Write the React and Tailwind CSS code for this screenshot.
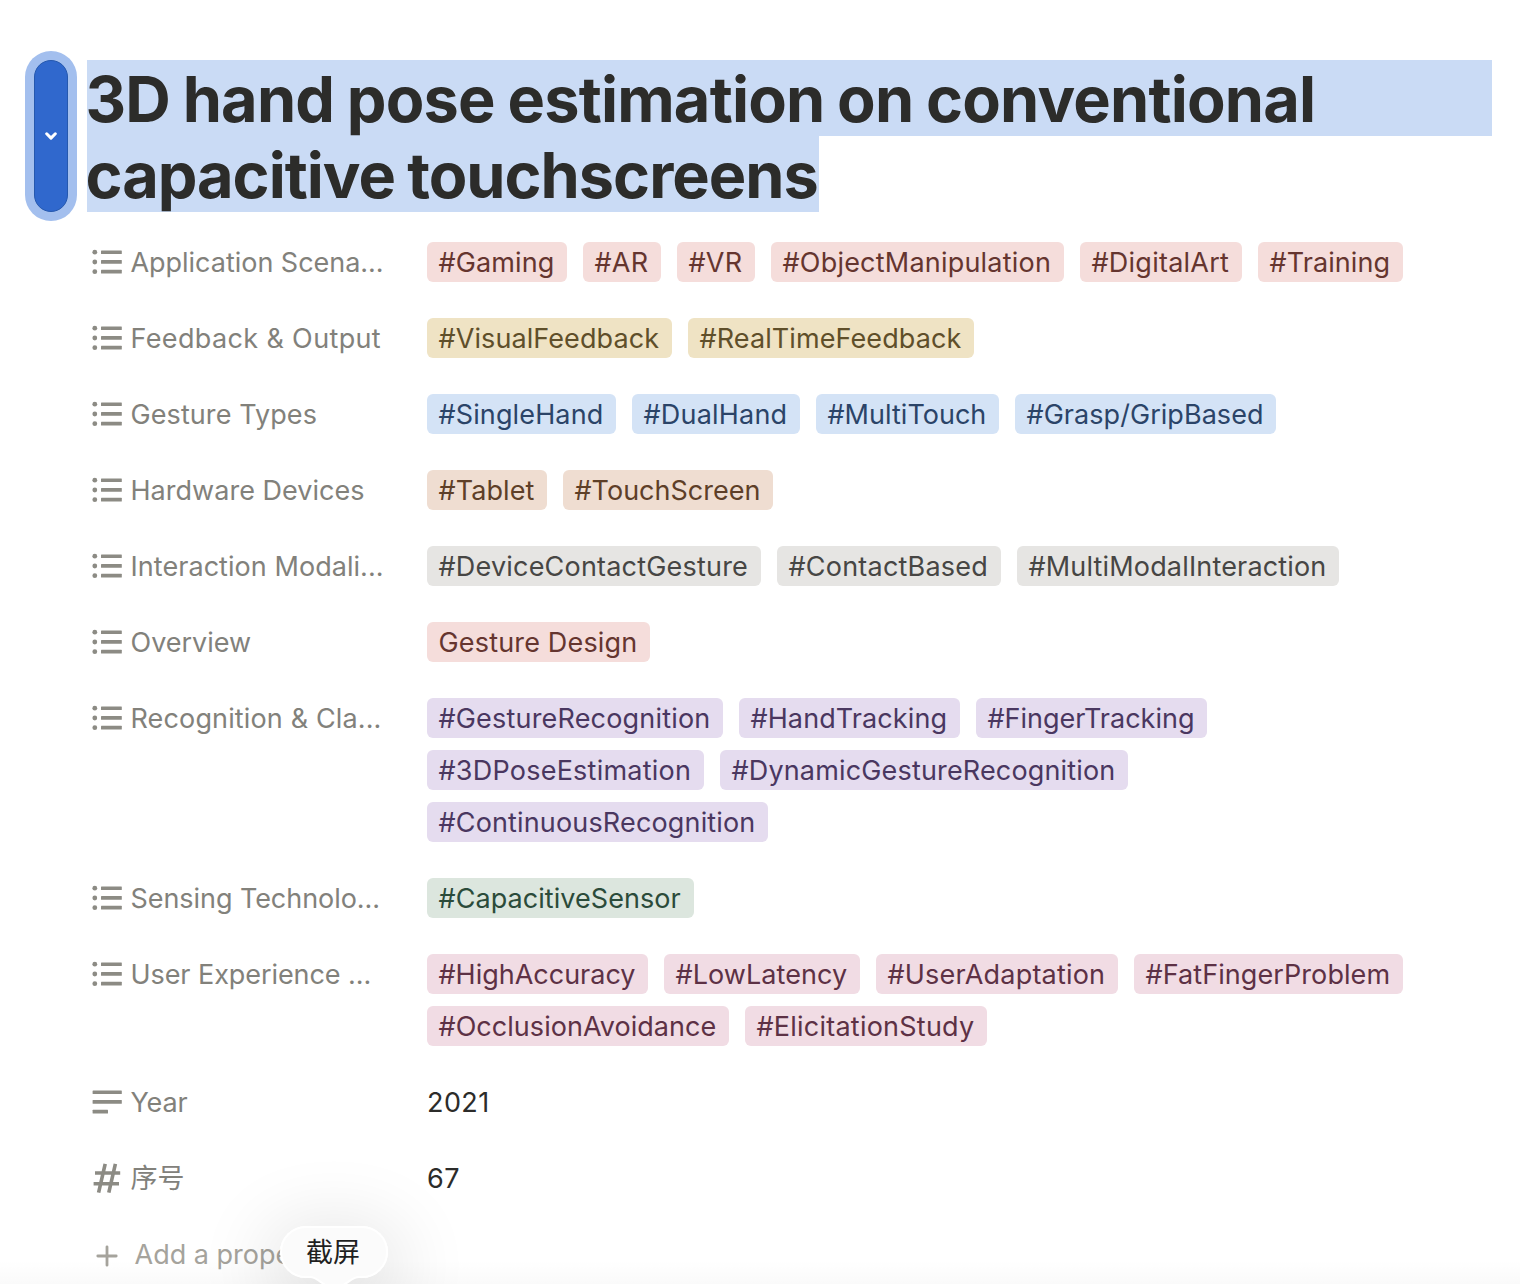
const TONES = {
  red: "bg-[#f5dddb] text-[#65352f]",
  yellow: "bg-[#efe3c4] text-[#5f4f2a]",
  blue: "bg-[#d4e3f6] text-[#2b4468]",
  orange: "bg-[#efddd1] text-[#5e3f28]",
  gray: "bg-[#e6e5e3] text-[#474644]",
  purple: "bg-[#e5dcef] text-[#4a3760]",
  green: "bg-[#dce6de] text-[#2b4b3a]",
  pink: "bg-[#f1dce4] text-[#5d3145]",
};

const ROWS = [
  {
    label: "Application Scena...",
    tracking: "tracking-[-0.03px]",
    tone: "red",
    tags: [
      ["#Gaming", "w-[140px] tracking-[0.11px]"],
      ["#AR", "w-[78px] tracking-[0.25px]"],
      ["#VR", "w-[78px] tracking-[0.25px]"],
      ["#ObjectManipulation", "w-[293px] tracking-[0.21px]"],
      ["#DigitalArt", "w-[162px] tracking-[0.24px]"],
      ["#Training", "w-[145px] tracking-[0.08px]"],
    ],
  },
  {
    label: "Feedback & Output",
    tracking: "tracking-[0.36px]",
    tone: "yellow",
    tags: [
      ["#VisualFeedback", "w-[245px] tracking-[0.09px]"],
      ["#RealTimeFeedback", "w-[286px] tracking-[0.1px]"],
    ],
  },
  {
    label: "Gesture Types",
    tracking: "tracking-[0.08px]",
    tone: "blue",
    tags: [
      ["#SingleHand", "w-[189px] tracking-[0.13px]"],
      ["#DualHand", "w-[168px] tracking-[0.2px]"],
      ["#MultiTouch", "w-[183px] tracking-[0.02px]"],
      ["#Grasp/GripBased", "w-[261px] tracking-[0.05px]"],
    ],
  },
  {
    label: "Hardware Devices",
    tracking: "tracking-[0.03px]",
    tone: "orange",
    tags: [
      ["#Tablet", "w-[120px] tracking-[0.08px]"],
      ["#TouchScreen", "w-[210px] tracking-[0.01px]"],
    ],
  },
  {
    label: "Interaction Modali...",
    tracking: "tracking-[0.05px]",
    tone: "gray",
    tags: [
      ["#DeviceContactGesture", "w-[334px] tracking-[0.2px]"],
      ["#ContactBased", "w-[224px] tracking-[0.22px]"],
      ["#MultiModalInteraction", "w-[322px] tracking-[0.165px]"],
    ],
  },
  {
    label: "Overview",
    tracking: "tracking-[0px]",
    tone: "red",
    tags: [["Gesture Design", "w-[223px] tracking-[0.17px]"]],
  },
  {
    label: "Recognition & Cla...",
    tracking: "tracking-[0.14px]",
    tone: "purple",
    tags: [
      ["#GestureRecognition", "w-[296px] tracking-[0.19px]"],
      ["#HandTracking", "w-[221px] tracking-[0.1px]"],
      ["#FingerTracking", "w-[231px] tracking-[0px]"],
      ["#3DPoseEstimation", "w-[277px] tracking-[0.23px]"],
      ["#DynamicGestureRecognition", "w-[408px] tracking-[0.16px]"],
      ["#ContinuousRecognition", "w-[341px] tracking-[0.155px]"],
    ],
  },
  {
    label: "Sensing Technolo...",
    tracking: "tracking-[-0.06px]",
    tone: "green",
    tags: [["#CapacitiveSensor", "w-[267px] tracking-[0.06px]"]],
  },
  {
    label: "User Experience ...",
    tracking: "tracking-[-0.07px]",
    tone: "pink",
    tags: [
      ["#HighAccuracy", "w-[221px] tracking-[-0.01px]"],
      ["#LowLatency", "w-[196px] tracking-[0.08px]"],
      ["#UserAdaptation", "w-[242px] tracking-[0.2px]"],
      ["#FatFingerProblem", "w-[269px] tracking-[0.08px]"],
      ["#OcclusionAvoidance", "w-[302px] tracking-[0.04px]"],
      ["#ElicitationStudy", "w-[242px] tracking-[0.23px]"],
    ],
  },
];

function ListIcon() {
  return (
    <svg viewBox="0 0 30 26" className="h-[26px] w-[30px]" fill="currentColor">
      <circle cx="2.8" cy="3.2" r="2.4" />
      <circle cx="2.8" cy="13" r="2.4" />
      <circle cx="2.8" cy="22.7" r="2.4" />
      <rect x="9" y="1.4" width="20.8" height="3.7" rx="0.5" />
      <rect x="9" y="11.1" width="20.8" height="3.7" rx="0.5" />
      <rect x="9" y="20.8" width="20.8" height="3.7" rx="0.5" />
    </svg>
  );
}

function TextIcon() {
  return (
    <svg viewBox="0 0 30 26" className="h-[26px] w-[30px]" fill="currentColor">
      <rect x="0.6" y="1.4" width="29.2" height="3.7" rx="0.5" />
      <rect x="0.6" y="11.1" width="29.2" height="3.7" rx="0.5" />
      <rect x="0.6" y="20.8" width="15.4" height="3.7" rx="0.5" />
    </svg>
  );
}

function NumberIcon() {
  return (
    <svg
      viewBox="0 0 30 30"
      className="h-[30px] w-[30px]"
      fill="none"
      stroke="currentColor"
      strokeWidth="3.6"
    >
      <path d="M3 10H28.2M1.6 20.8H27M13.2 0.8L6.6 29.6M23.4 0.8L16.8 29.6" />
    </svg>
  );
}

function Row({ icon, label, tracking = "", children }) {
  return (
    <div className="flex items-start">
      <div className="flex h-10 w-[335px] shrink-0 items-center gap-[8.5px] text-[#82817b]">
        <span className="flex w-[30px] justify-center text-[#8c8b84]">{icon}</span>
        <span className={`h-10 whitespace-nowrap ${tracking}`}>{label}</span>
      </div>
      <div className="flex w-[1000px] flex-wrap gap-x-4 gap-y-3">{children}</div>
    </div>
  );
}

export default function App() {
  return (
    <div className="relative h-[1284px] w-[1520px] overflow-hidden bg-white pt-[51px] font-['Inter','Noto_Sans_CJK_SC',sans-serif] text-[27px] leading-[42px] font-[420] text-[#2c2c2a]">
      <header className="flex items-center pl-[25px]">
        <button className="flex h-[170px] w-[52px] shrink-0 items-center justify-center rounded-full bg-[#a3bfee]">
          <span className="flex h-[152px] w-[34px] items-center justify-center rounded-full border border-[#2558ae] bg-[#3068cd] text-white">
            <svg
              viewBox="0 0 12 8"
              className="h-2 w-3"
              fill="none"
              stroke="currentColor"
              strokeWidth="3"
              strokeLinecap="round"
              strokeLinejoin="round"
            >
              <path d="M1.7 1.8L6 6.1L10.3 1.8" />
            </svg>
          </span>
        </button>
        <h1 className="ml-[10px] w-[1405px] text-[63px] leading-[76px] font-bold [word-spacing:-1.5px]">
          <span className="block h-[76px] bg-[#cadbf5] pt-[1px] -indent-[1.5px] tracking-[-0.8px] whitespace-nowrap">
            3D hand pose estimation on conventional
          </span>
          <span className="block h-[76px] w-[732px] bg-[#cadbf5] pt-[1px] -indent-[1.5px] tracking-[-1.02px] whitespace-nowrap">
            capacitive touchscreens
          </span>
        </h1>
      </header>

      <main className="mt-[21px] flex flex-col gap-9 pl-[92px]">
        {ROWS.map((row) => (
          <Row key={row.label} icon={<ListIcon />} label={row.label} tracking={row.tracking}>
            {row.tags.map(([text, size]) => (
              <span
                key={text}
                className={`h-10 rounded-[6px] pl-[11.5px] whitespace-nowrap ${size} ${TONES[row.tone]}`}
              >
                {text}
              </span>
            ))}
          </Row>
        ))}
        <Row icon={<TextIcon />} label="Year" tracking="tracking-[-0.15px]">
          <span className="h-10 tracking-[0.42px]">2021</span>
        </Row>
        <Row icon={<NumberIcon />} label="序号">
          <span className="h-10 tracking-[0.4px]">67</span>
        </Row>
        <div className="flex h-10 items-center text-[#a5a39c]">
          <svg
            viewBox="0 0 22 22"
            className="mt-1 ml-1 h-[22px] w-[22px]"
            fill="none"
            stroke="currentColor"
            strokeWidth="2.8"
            strokeLinecap="round"
          >
            <path d="M11 1.8V20.2M1.8 11H20.2" />
          </svg>
          <span className="ml-[16.5px] h-10 whitespace-nowrap">Add a prope</span>
        </div>
      </main>

      <div className="absolute bottom-0 left-0 h-6 w-full bg-linear-to-b from-transparent to-black/2" />
      <div className="absolute top-[1226px] left-[280px] h-[52px] w-[108px] rounded-full shadow-[0_14px_76px_16px_rgba(0,0,0,0.11)]">
        <svg viewBox="0 0 108 60" className="absolute top-0 left-0 h-[60px] w-[108px]">
          <path
            d="M26 1H82A25 25 0 0 1 82 51H79C71 51 68 59 54 63C41 59 38 51 30 51H26A25 25 0 0 1 26 1Z"
            fill="#fbfbfb"
            stroke="#fff"
            strokeWidth="2"
          />
        </svg>
        <span className="absolute top-[6px] left-[26px] whitespace-nowrap text-[#1f1f1f]">截屏</span>
      </div>
    </div>
  );
}
